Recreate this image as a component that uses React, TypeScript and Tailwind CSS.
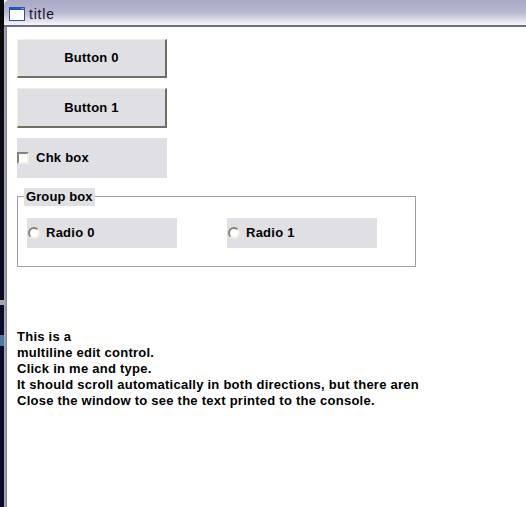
function Btn({ label, h }: { label: string; h: string }) {
  return (
    <div className={`${h} flex w-[150px] items-center justify-center border-t border-l border-t-[#f1efe2] border-l-[#f1efe2] border-r-2 border-b-2 border-r-[#716f64] border-b-[#716f64] bg-[#e0dfe3] text-[13px] font-bold tracking-[0.25px] text-black`}>
      {label}
    </div>
  );
}

function Radio({ label }: { label: string }) {
  return (
    <div className="flex h-[30px] w-[150px] items-center bg-[#e0dfe3] text-[13px] font-bold tracking-[0.25px] text-black">
      <span className="ml-[1px] h-[12px] w-[12px] rounded-full border-2 border-t-[#85837a] border-l-[#85837a] border-r-[#f1efe2] border-b-[#f1efe2] bg-white" />
      <span className="ml-[6px] pb-[1px]">{label}</span>
    </div>
  );
}

export default function App() {
  return (
    <div className="flex h-[507px] w-[526px] overflow-hidden bg-white font-['Liberation_Sans',sans-serif]">
      <div className="flex w-[4px] shrink-0 flex-col bg-[#0a0a2a]">
        <div className="h-[300px] bg-gradient-to-b from-[#0a0a0a] to-[#0a0a20]" />
        <div className="h-[5px] bg-[#a8a8a8]" />
        <div className="h-[30px]" />
        <div className="h-[11px] bg-[#4a7a9c]" />
      </div>
      <div className="flex min-w-0 flex-1 flex-col">
        <div className="flex h-[25px] shrink-0 items-center gap-[4px] rounded-tl-[5px] bg-gradient-to-b from-[#a8a8c4] via-[#b8b8d0] to-[#f7f7fb] pl-[5px] pt-[3px]">
          <svg width="16" height="14" viewBox="0 0 16 14" className="shrink-0">
            <rect x="0.5" y="0.5" width="15" height="13" fill="#ffffff" stroke="#2a4f9c" />
            <rect x="0" y="0" width="16" height="3" fill="#1f57c9" />
            <rect x="12" y="1" width="3" height="1" fill="#e8853a" />
          </svg>
          <span className="text-[14px] font-normal leading-none tracking-[0.8px] text-[#1a1030]">title</span>
        </div>
        <div className="h-[2px] shrink-0 bg-[#6f6f80]" />
        <div className="flex min-h-0 flex-1">
          <div className="w-[3px] shrink-0 bg-gradient-to-r from-[#b0b0c4] to-[#7f7f90]" />
          <div className="flex flex-1 flex-col pl-[10px] pt-[12px]">
            <Btn label="Button 0" h="h-[39px]" />
            <div className="mt-[10px]">
              <Btn label="Button 1" h="h-10" />
            </div>
            <div className="mt-[10px] flex h-10 w-[150px] items-center bg-[#e0dfe3] text-[13px] font-bold tracking-[0.25px] text-black">
              <span className="h-[12px] w-[12px] border-2 border-t-[#85837a] border-l-[#85837a] border-r-[#f1efe2] border-b-[#f1efe2] bg-white" />
              <span className="ml-[7px]">Chk box</span>
            </div>
            <div className="relative mt-[18px] flex h-[71px] w-[399px] gap-[50px] border border-[#a0a0a0] pl-[9px] pt-[21px]">
              <span className="absolute left-[6px] top-[-9px] bg-[#e0dfe3] px-[2px] text-[13px] font-bold leading-[18px] tracking-[0.1px] text-black">
                Group box
              </span>
              <Radio label="Radio 0" />
              <Radio label="Radio 1" />
            </div>
            <div className="mt-[62px] whitespace-nowrap text-[13px] font-bold leading-[16px] tracking-[0.25px] text-black">
              <div>This is a</div>
              <div>multiline edit control.</div>
              <div>Click in me and type.</div>
              <div>It should scroll automatically in both directions, but there aren</div>
              <div>Close the window to see the text printed to the console.</div>
            </div>
          </div>
        </div>
      </div>
    </div>
  );
}
